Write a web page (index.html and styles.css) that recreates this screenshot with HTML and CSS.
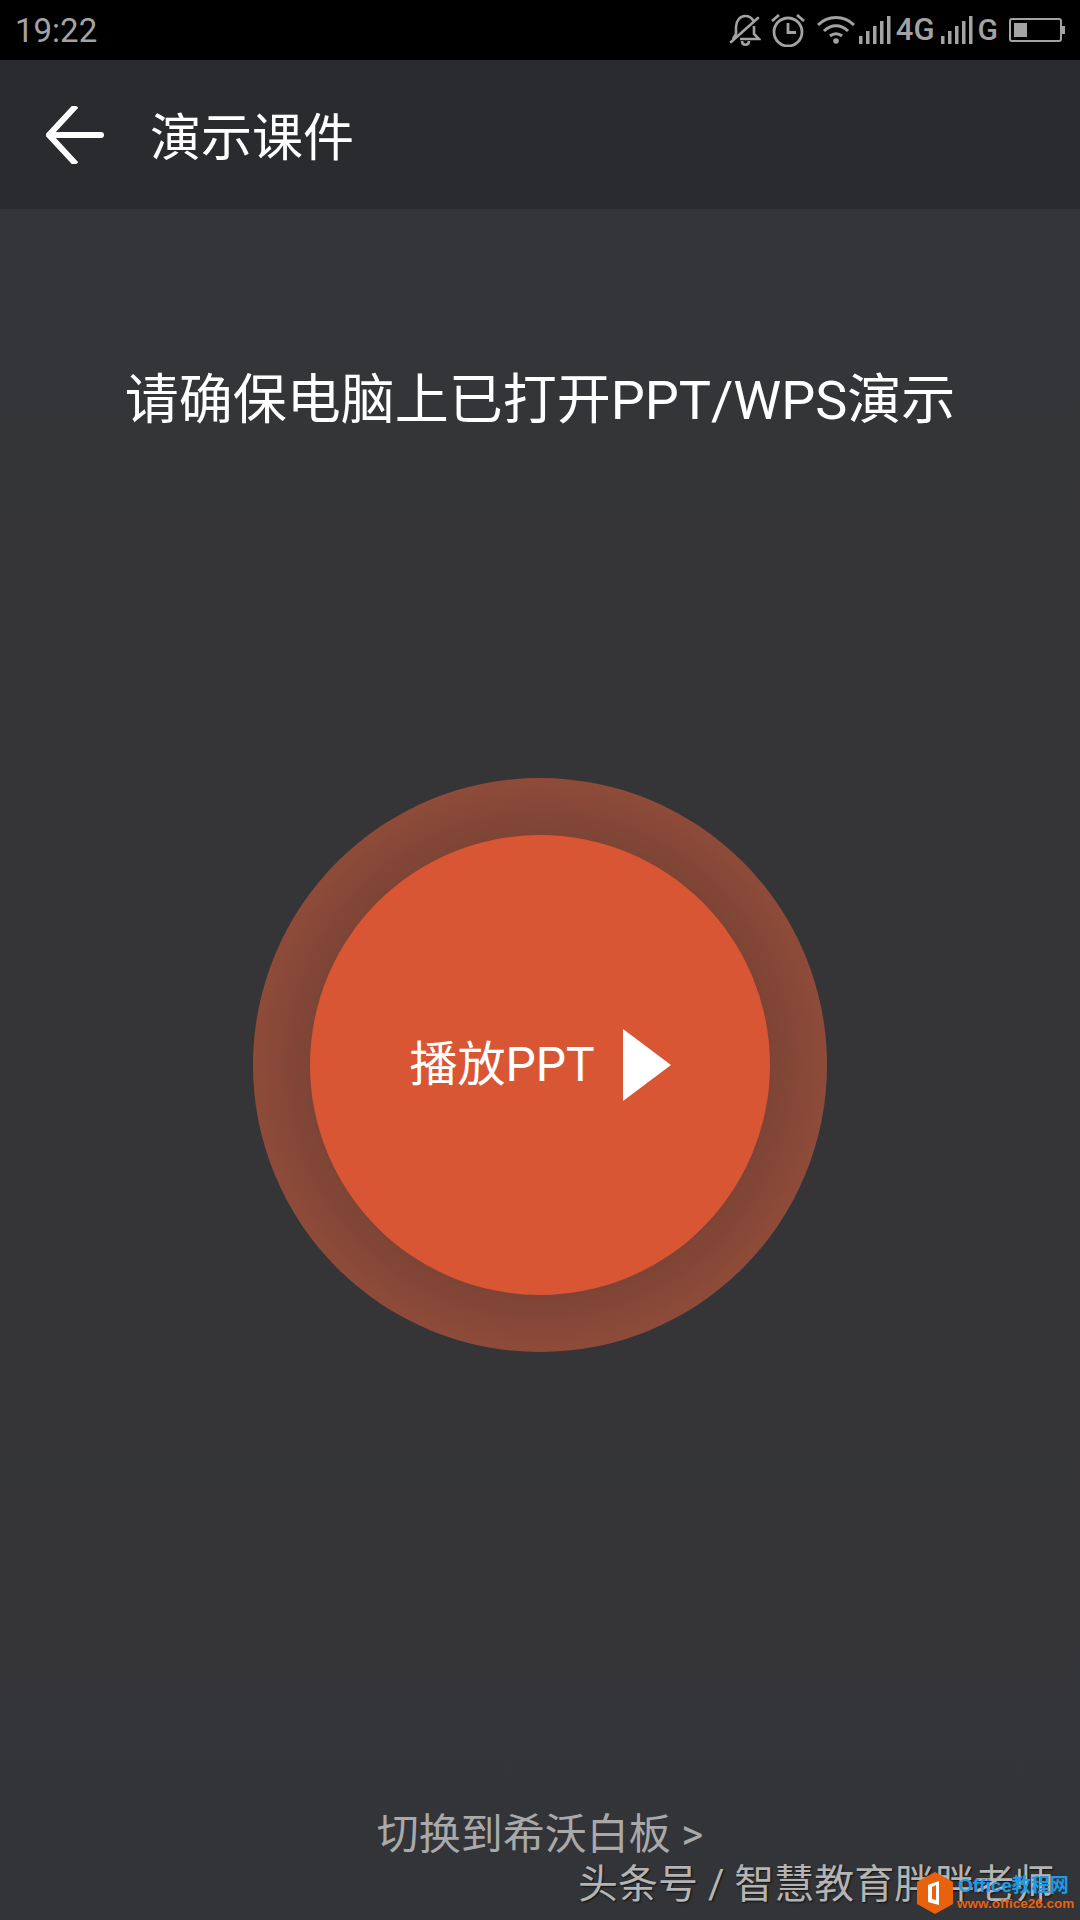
FILE: index.html
```html
<!DOCTYPE html>
<html lang="zh-CN">
<head>
<meta charset="utf-8">
<title>演示课件</title>
<link rel="stylesheet" href="styles.css">
</head>
<body>
<div class="page">
  <div class="statusbar">
    <span class="time">19:22</span>
    <div class="status-icons">
      <svg class="ic-bell" width="32" height="34" viewBox="0 0 32 34" fill="none" stroke="#a3a3a3" stroke-width="2.6">
        <path d="M4 26 L7 21 V14 C7 8 11 3 16 3 C20 3 23 5 24.500 8 M25 13 V21 L30 26 H11"/>
        <path d="M13 28 C13 33 20 33 20 28"/>
        <path d="M2 29 L29 5" stroke-linecap="round"/>
      </svg>
      <svg class="ic-alarm" width="34" height="34" viewBox="0 0 34 34" fill="none" stroke="#a3a3a3" stroke-width="2.800">
        <circle cx="17" cy="19" r="14"/>
        <path d="M17 10 V19.500 H25"/>
        <path d="M1 8 L8 2 M26 2 L33 8"/>
      </svg>
      <svg class="ic-wifi" width="38" height="28" viewBox="0 0 38 28" fill="none" stroke="#a3a3a3" stroke-width="3">
        <path d="M1 9 C11 -1 27 -1 37 9"/>
        <path d="M7 15 C14 8 24 8 31 15"/>
        <path d="M13 20 C16.500 17 21.500 17 25 20"/>
        <circle cx="19" cy="25" r="2.800" fill="#a3a3a3" stroke="none"/>
      </svg>
      <svg class="ic-signal" width="32" height="28" viewBox="0 0 32 28" fill="#a3a3a3">
        <rect x="0" y="20" width="3.500" height="8"/>
        <rect x="7" y="15" width="3.500" height="13"/>
        <rect x="14" y="10" width="3.500" height="18"/>
        <rect x="21" y="5" width="3.500" height="23"/>
        <rect x="28" y="0" width="3.500" height="28"/>
      </svg>
      <span class="net net-4g">4G</span>
      <svg class="ic-signal" width="32" height="28" viewBox="0 0 32 28" fill="#a3a3a3">
        <rect x="0" y="20" width="3.500" height="8"/>
        <rect x="7" y="15" width="3.500" height="13"/>
        <rect x="14" y="10" width="3.500" height="18"/>
        <rect x="21" y="5" width="3.500" height="23"/>
        <rect x="28" y="0" width="3.500" height="28"/>
      </svg>
      <span class="net">G</span>
      <div class="battery"><div class="battery-level"></div></div>
    </div>
  </div>

  <div class="appbar">
    <svg class="back" width="58" height="58" viewBox="0 0 58 58" fill="none" stroke="#fff" stroke-width="6" stroke-linecap="round">
      <path d="M28 2 L3 29 L28 56" stroke-linejoin="miter" stroke-linecap="square"/>
      <path d="M5 29 H55"/>
    </svg>
    <span class="title">演示课件</span>
  </div>

  <div class="main">
    <p class="hint">请确保电脑上已打开PPT/WPS演示</p>
    <div class="ring">
      <div class="play-btn">
        <span class="play-label">播放PPT</span>
        <span class="play-tri"></span>
      </div>
    </div>
    <p class="switch">切换到希沃白板 &gt;</p>
  </div>
</div>

<div class="wm-text">头条号 / 智慧教育胖胖老师</div>
<div class="wm-logo">
  <svg width="36" height="42" viewBox="0 0 36 42">
    <path d="M18 0 L36 10 V32 L18 42 L0 32 V10 Z" fill="#e8610f"/>
    <path d="M11 13 L22 9 V33 L11 30 Z M15 15 V27 L19 28 V13 Z" fill="#fff" fill-rule="evenodd"/>
  </svg>
  <div class="wm-words">
    <span class="wm-name">Office教程网</span>
    <span class="wm-url">www.office26.com</span>
  </div>
</div>
</body>
</html>
```

FILE: styles.css
```css
* { box-sizing: border-box; }
html, body { margin: 0; padding: 0; }
body {
  width: 1080px;
  height: 1920px;
  overflow: hidden;
  background: #353537;
  color: #fff;
  font-family: Roboto, "Noto Sans CJK SC", sans-serif;
}
p { margin: 0; }

.page { display: flex; flex-direction: column; height: 1920px; }

.statusbar {
  height: 60px;
  background: #000;
  display: flex;
  align-items: center;
  justify-content: space-between;
  padding: 0 15px 0 15px;
  color: #a3a3a3;
}
.time { font-size: 33px; }
.status-icons { display: flex; align-items: center; }
.status-icons svg { display: block; }
.ic-bell { margin-right: 10px; }
.ic-alarm { margin-right: 12px; }
.ic-wifi { margin-right: 4px; }
.net { font-size: 30px; font-weight: 500; line-height: 32px; margin: 0 4px 0 5px; }
.net-4g { font-size: 31px; margin-right: 6px; }
.battery {
  width: 53px;
  height: 24px;
  margin-left: 7px;
  margin-right: 3px;
  border: 2px solid #a3a3a3;
  border-radius: 3px;
  padding: 3px;
  position: relative;
}
.battery::after {
  content: "";
  position: absolute;
  right: -5px;
  top: 6px;
  width: 3px;
  height: 8px;
  background: #a3a3a3;
}
.battery-level { width: 13px; height: 14px; background: #a3a3a3; }

.appbar {
  height: 149px;
  background: #2a2b2e;
  display: flex;
  align-items: center;
  padding-left: 46px;
}
.back { margin-right: 46px; }
.title { font-size: 51px; line-height: 60px; padding-top: 9px; }

.main {
  flex: 1;
  display: flex;
  flex-direction: column;
  align-items: center;
  background: linear-gradient(#343539, #353537 20%, #353537 70%, #333438);
}
.hint { font-size: 54px; line-height: 70px; margin-top: 157px; }

.ring {
  width: 574px;
  height: 574px;
  margin-top: 342px;
  border-radius: 50%;
  background: radial-gradient(circle closest-side, #7d4435 80%, #8f4b39 100%);
  display: flex;
  align-items: center;
  justify-content: center;
}
.play-btn {
  width: 460px;
  height: 460px;
  border-radius: 50%;
  background: #d95635;
  display: flex;
  align-items: center;
  justify-content: center;
}
.play-label { font-size: 48px; line-height: 60px; }
.play-tri {
  width: 0;
  height: 0;
  margin-left: 28px;
  border-left: 48px solid #fff;
  border-top: 36px solid transparent;
  border-bottom: 36px solid transparent;
}
.switch {
  font-size: 42px;
  line-height: 50px;
  color: #a9a9aa;
  margin-top: 458px;
}

/* watermark over the bottom edge */
.wm-text {
  position: absolute;
  left: 578px;
  top: 1860px;
  font-size: 40px;
  line-height: 50px;
  white-space: nowrap;
  color: #b4b4b4;
  text-shadow: 1px 1px 2px #111;
}
.wm-logo {
  position: absolute;
  left: 917px;
  top: 1872px;
  display: flex;
}
.wm-words { display: flex; flex-direction: column; margin-left: 5px; padding-top: 3px; font-family: "Liberation Sans", "Noto Sans CJK SC", sans-serif; font-weight: 700; white-space: nowrap; }
.wm-name { font-size: 19px; line-height: 22px; color: #1d9be6; }
.wm-url { font-size: 13.500px; line-height: 14px; color: #e8610f; margin-left: -1px; }
```
